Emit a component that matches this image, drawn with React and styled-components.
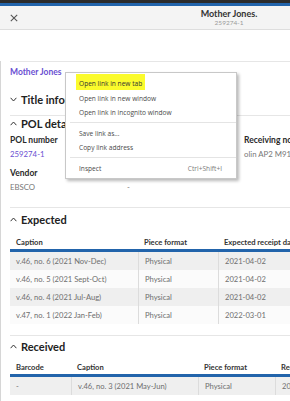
import React from "react";
import styled, { createGlobalStyle } from "styled-components";

const Global = createGlobalStyle`
  html, body { margin: 0; padding: 0; background: #fff; }
  body { font-family: Lato, "Liberation Sans", sans-serif; }
`;

const Screen = styled.div`
  position: relative;
  width: 290px;
  height: 401px;
  overflow: hidden;
  background: #fff;
`;

const Pane = styled.div`
  width: 458px;
`;

const TopBar = styled.div`
  height: 3px;
  background: #2b2b2b;
  border-bottom: 3px solid #2264ab;
`;

const Header = styled.div`
  height: 23px;
  background: #f4f4f4;
  border-bottom: 1px solid #dedede;
  display: flex;
  align-items: center;
  position: relative;
`;

const CloseBtn = styled.div`
  width: 8px;
  height: 8px;
  margin-left: 10px;
  display: flex;
`;

const TitleBlock = styled.div`
  flex: 1;
  display: flex;
  flex-direction: column;
  align-items: center;
  margin-right: 18px;
`;

const Title = styled.div`
  font-size: 9px;
  font-weight: 700;
  color: #333;
  line-height: 10px;
`;

const Sub = styled.div`
  font-size: 6.5px;
  color: #9a9a9a;
  line-height: 8px;
`;

const Body = styled.div`
  border-left: 1px solid #d6d6d6;
  padding-left: 9px;
  padding-bottom: 20px;
`;

const Divider = styled.div`
  height: 1px;
  background: #e6e6e6;
  margin-top: ${(p) => p.$mt}px;
`;

const Link = styled.div`
  margin-top: ${(p) => p.$mt}px;
  font-size: ${(p) => (p.$bold ? 8.5 : 7.8)}px;
  font-weight: ${(p) => (p.$bold ? 700 : 400)};
  color: #6a4fd2;
  line-height: 10px;
`;

const AccHead = styled.div`
  margin-top: ${(p) => p.$mt}px;
  height: 14px;
  display: flex;
  align-items: center;
  gap: 4px;
  font-size: 11px;
  font-weight: 700;
  color: #222;
`;

const Fields = styled.div`
  display: grid;
  grid-template-columns: 117px 117px 117px 100px;
`;

const Field = styled.div`
  display: flex;
  flex-direction: column;
  margin-top: ${(p) => p.$mt}px;
`;

const Label = styled.div`
  font-size: 8.5px;
  font-weight: 700;
  color: #2a2a2a;
  line-height: 10px;
  white-space: nowrap;
`;

const Value = styled.div`
  margin-top: 4px;
  font-size: 7.8px;
  color: #777;
  line-height: 10px;
  white-space: nowrap;
`;

const Table = styled.div`
  margin-top: ${(p) => p.$mt}px;
`;

const Row = styled.div`
  display: grid;
  grid-template-columns: ${(p) => p.$cols};
  height: ${(p) => (p.$head ? 14 : 18)}px;
  background: ${(p) => (p.$head ? "#fff" : p.$odd ? "#efefef" : "#fbfbfb")};
  border-bottom: ${(p) => (p.$head ? "3px solid #2264ab" : "none")};
`;

const Cell = styled.div`
  display: flex;
  align-items: center;
  padding-left: 6px;
  font-size: 7.6px;
  white-space: nowrap;
  color: ${(p) => (p.$head ? "#333" : "#6e6e6e")};
  font-weight: ${(p) => (p.$head ? 700 : 400)};
  border-left: ${(p) => (p.$sep ? "1px solid #dcdcdc" : "none")};
`;

const Menu = styled.div`
  position: absolute;
  left: 65px;
  top: 72px;
  width: 170px;
  padding: 4px 0 3px;
  background: #fff;
  border: 1px solid #c8c8c8;
  box-shadow: 2px 2px 3px rgba(0, 0, 0, 0.28);
  font-family: "Open Sans", "Noto Sans", sans-serif;
`;

const Item = styled.div`
  height: 14px;
  display: flex;
  align-items: ${(p) => (p.$marked ? "flex-start" : "center")};
  justify-content: space-between;
  padding: 0 14px 0 13px;
  font-size: 6.6px;
  color: #4a4a4a;
`;

const Mark = styled.span`
  background: #fbfb2c;
  margin: -3px 0 0 -3px;
  padding: 4px 3px 0;
  line-height: 12px;
  color: #333;
`;

const Shortcut = styled.span`
  color: #7a7a7a;
`;

const Sep = styled.div`
  height: 1px;
  background: #e4e4e4;
  margin: 3px 0 3px 4px;
`;

const Chevron = ({ up }) => (
  <svg width="7" height="5" viewBox="0 0 7 5" fill="none">
    <path
      d={up ? "M0.6 4.2 L3.5 1 L6.4 4.2" : "M0.6 0.8 L3.5 4 L6.4 0.8"}
      stroke="#333"
      strokeWidth="1"
    />
  </svg>
);

const expected = [
  ["v.46, no. 6 (2021 Nov-Dec)", "Physical", "2021-04-02"],
  ["v.46, no. 5 (2021 Sept-Oct)", "Physical", "2021-04-02"],
  ["v.46, no. 4 (2021 Jul-Aug)", "Physical", "2021-04-02"],
  ["v.47, no. 1 (2022 Jan-Feb)", "Physical", "2022-03-01"],
];

const expCols = "128px 80px 240px";
const recCols = "61px 127px 77px 200px";

export default function App() {
  return (
    <Screen>
      <Global />
      <Pane>
        <TopBar />
        <Header>
          <CloseBtn>
            <svg width="8" height="8" viewBox="0 0 8 8">
              <path d="M0.8 0.8 L7.2 7.2 M7.2 0.8 L0.8 7.2" stroke="#555" strokeWidth="1.1" />
            </svg>
          </CloseBtn>
          <TitleBlock>
            <Title>Mother Jones.</Title>
            <Sub>259274-1</Sub>
          </TitleBlock>
        </Header>
        <Body>
          <Divider $mt={31} />
          <Link $mt={5} $bold>Mother Jones</Link>
          <AccHead $mt={15}>
            <Chevron />
            Title information
          </AccHead>
          <Divider $mt={9} />
          <AccHead $mt={0}>
            <Chevron up />
            POL details
          </AccHead>
          <Fields>
            <Field $mt={5}>
              <Label>POL number</Label>
              <Link $mt={4}>259274-1</Link>
            </Field>
            <Field $mt={5}>
              <Label>Title</Label>
              <Value>Mother Jones</Value>
            </Field>
            <Field $mt={5}>
              <Label>Receiving note</Label>
              <Value>olin AP2 M918</Value>
            </Field>
            <Field $mt={5}>
              <Label>Material type</Label>
              <Value>Periodical</Value>
            </Field>
            <Field $mt={9}>
              <Label>Vendor</Label>
              <Value>EBSCO</Value>
            </Field>
            <Field $mt={9}>
              <Label>Requester</Label>
              <Value>-</Value>
            </Field>
          </Fields>
          <Divider $mt={15} />
          <AccHead $mt={4}>
            <Chevron up />
            Expected
          </AccHead>
          <Table $mt={9}>
            <Row $head $cols={expCols}>
              <Cell $head>Caption</Cell>
              <Cell $head>Piece format</Cell>
              <Cell $head>Expected receipt date</Cell>
            </Row>
            {expected.map((r, i) => (
              <Row key={i} $cols={expCols} $odd={i % 2 === 0}>
                <Cell>{r[0]}</Cell>
                <Cell $sep>{r[1]}</Cell>
                <Cell $sep>{r[2]}</Cell>
              </Row>
            ))}
          </Table>
          <Divider $mt={11} />
          <AccHead $mt={3}>
            <Chevron up />
            Received
          </AccHead>
          <Table $mt={7}>
            <Row $head $cols={recCols}>
              <Cell $head>Barcode</Cell>
              <Cell $head>Caption</Cell>
              <Cell $head>Piece format</Cell>
              <Cell $head>Receipt date</Cell>
            </Row>
            <Row $cols={recCols} $odd>
              <Cell>-</Cell>
              <Cell $sep>v.46, no. 3 (2021 May-Jun)</Cell>
              <Cell $sep>Physical</Cell>
              <Cell $sep>2021-04-02</Cell>
            </Row>
          </Table>
        </Body>
      </Pane>
      <Menu>
        <Item $marked>
          <Mark>Open link in new tab</Mark>
        </Item>
        <Item>Open link in new window</Item>
        <Item>Open link in incognito window</Item>
        <Sep />
        <Item>Save link as...</Item>
        <Item>Copy link address</Item>
        <Sep />
        <Item>
          <span>Inspect</span>
          <Shortcut>Ctrl+Shift+I</Shortcut>
        </Item>
      </Menu>
    </Screen>
  );
}
